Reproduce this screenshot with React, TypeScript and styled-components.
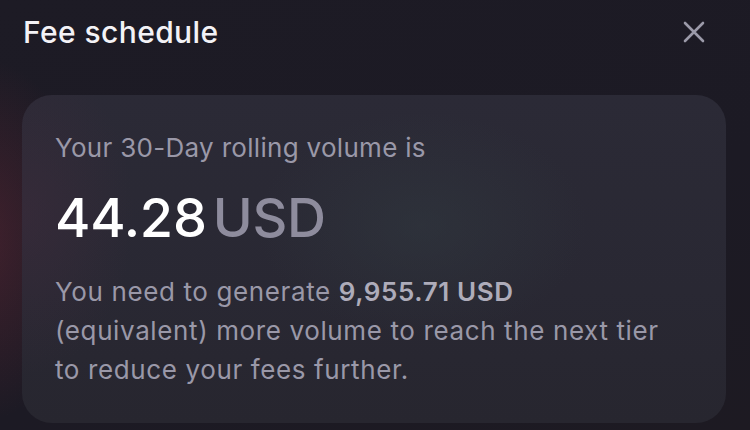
import React from "react";
import styled, { createGlobalStyle } from "styled-components";

const Global = createGlobalStyle`
  html, body { margin: 0; padding: 0; background: #1c1a23; }
  body { font-family: Inter, "Noto Sans", sans-serif; -webkit-font-smoothing: antialiased; }
`;

const Screen = styled.div`
  width: 750px;
  height: 430px;
  overflow: hidden;
  box-sizing: border-box;
  padding: 14px 24px 0 22px;
  display: flex;
  flex-direction: column;
  background:
    radial-gradient(ellipse 160px 260px at -20px 240px, rgba(110, 40, 55, 0.45), transparent 70%),
    linear-gradient(160deg, #1d1b25 0%, #1c1a24 60%, #1d1a22 100%);
`;

const Header = styled.div`
  display: flex;
  align-items: center;
  justify-content: space-between;
  height: 36px;
`;

const Title = styled.h1`
  margin: 0 0 0 1px;
  font-size: 30px;
  line-height: 36px;
  font-weight: 500;
  color: #f3f2f6;
  letter-spacing: 0.4px;
`;

const CloseButton = styled.button`
  background: none;
  border: 0;
  padding: 0;
  margin-right: 21px;
  width: 22px;
  height: 22px;
  display: flex;
  align-items: center;
  justify-content: center;
  cursor: pointer;
`;

const Card = styled.div`
  margin-top: 45px;
  width: 704px;
  height: 328px;
  box-sizing: border-box;
  border-radius: 30px;
  padding: 38px 32px 0 33px;
  background:
    radial-gradient(ellipse 220px 150px at 400px 130px, rgba(50, 60, 66, 0.45), transparent 75%),
    radial-gradient(ellipse 140px 200px at 0px 120px, rgba(75, 45, 65, 0.35), transparent 80%),
    linear-gradient(180deg, #2b2a36 0%, #292833 60%, #27262f 100%);
`;

const Label = styled.div`
  font-size: 26px;
  color: #9a98a8;
  line-height: 30px;
  letter-spacing: 0.3px;
`;

const Amount = styled.div`
  margin-top: 27px;
  display: flex;
  align-items: baseline;
  gap: 6px;
  line-height: 56px;
`;

const Value = styled.span`
  font-size: 54px;
  font-weight: 500;
  color: #ffffff;
  letter-spacing: -0.2px;
`;

const Currency = styled.span`
  font-size: 54px;
  font-weight: 500;
  color: #8e8c9d;
  letter-spacing: -0.3px;
`;

const Note = styled.p`
  margin: 26px 0 0;
  font-size: 26px;
  line-height: 39px;
  color: #9a98a8;
  letter-spacing: 0.62px;
`;

const Strong = styled.strong`
  font-weight: 600;
  color: #aeacba;
  letter-spacing: 0.6px;
`;

export default function App() {
  return (
    <>
      <Global />
      <Screen>
        <Header>
          <Title>Fee schedule</Title>
          <CloseButton aria-label="Close">
            <svg width="22" height="22" viewBox="0 0 22 22">
              <path d="M2 2 L20 20 M20 2 L2 20" stroke="#9b9aa9" strokeWidth="2.6" strokeLinecap="round" />
            </svg>
          </CloseButton>
        </Header>
        <Card>
          <Label>Your 30-Day rolling volume is</Label>
          <Amount>
            <Value>44.28</Value>
            <Currency>USD</Currency>
          </Amount>
          <Note>
            You need to generate <Strong>9,955.71 USD</Strong>
            <br />
            (equivalent) more volume to reach the next tier
            <br />
            to reduce your fees further.
          </Note>
        </Card>
      </Screen>
    </>
  );
}
